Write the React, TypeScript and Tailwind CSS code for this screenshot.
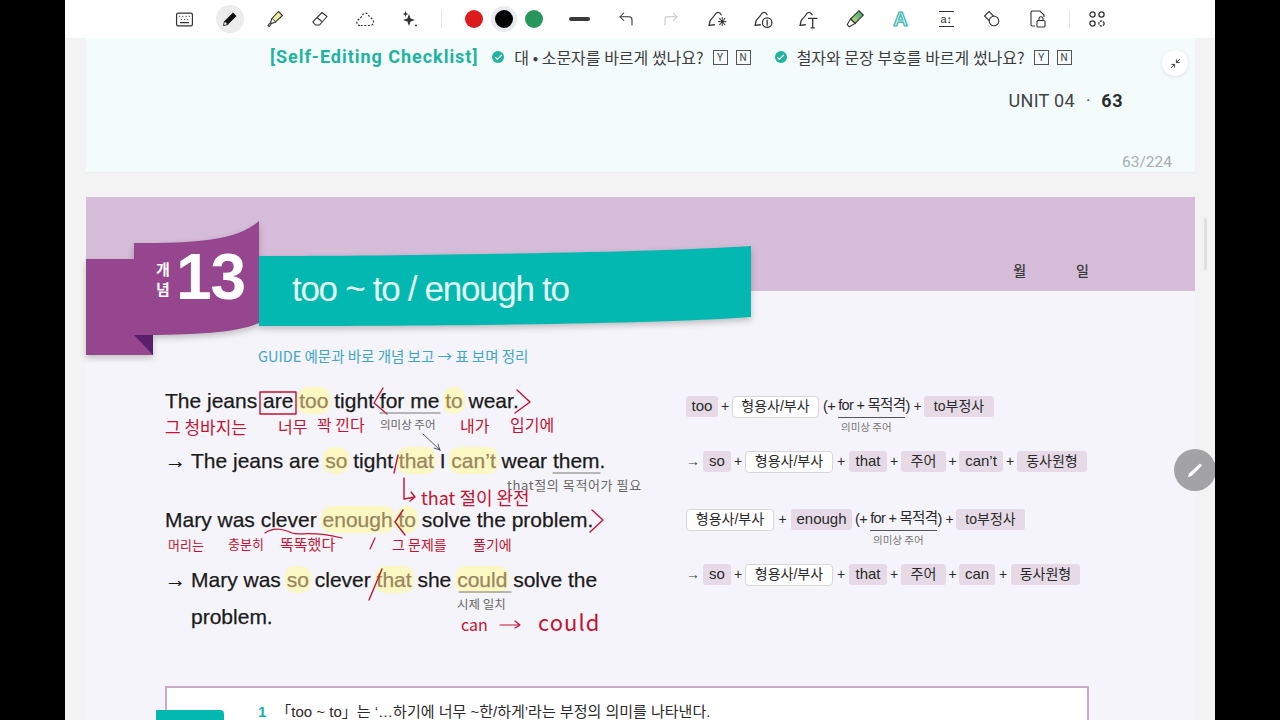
import { Check, CornerUpLeft, CornerUpRight, Keyboard, Minimize2 } from 'lucide-react';
import type { ReactNode } from 'react';

const sans = "font-['Liberation_Sans','Noto_Sans_CJK_KR',sans-serif]";
const kr = "font-['Noto_Sans_CJK_KR',sans-serif]";

function PenIcon() {
  return (
    <svg width="18" height="18" viewBox="0 0 18 18">
      <path d="M12 2.5 15.5 6 7 14.5 2.5 15.5 3.5 11Z" fill="#111" />
      <path d="M3.5 11 7 14.5 2.5 15.5Z" fill="#fff" stroke="#111" strokeWidth="0.8" />
    </svg>
  );
}

function HighlighterIcon() {
  return (
    <svg width="18" height="18" viewBox="0 0 18 18" fill="none" stroke="#333" strokeWidth="1.1">
      <path d="M12.5 1.5 16.5 5.5 9.5 12 6 8.5Z" fill="#f1efa5" />
      <path d="M6 8.5 4.5 12.5 5.5 13.5 9.5 12M4.5 12.5 2 15.5 3.2 16.5 5.5 13.5" fill="#fff" />
    </svg>
  );
}

function EraserIcon() {
  return (
    <svg width="18" height="18" viewBox="0 0 18 18" fill="none" stroke="#333" strokeWidth="1.1" strokeLinejoin="round">
      <path d="M11 2.5 16 6.5 8.5 15 4.5 15 1.8 11.8Z" />
      <path d="M6 7.5 10.8 11.5" />
    </svg>
  );
}

function LassoIcon() {
  return (
    <svg width="20" height="18" viewBox="0 0 20 18" fill="none" stroke="#333" strokeWidth="1.2" strokeDasharray="2 1.6">
      <path d="M5 15.5C2 15.5 1 12.5 2.5 10.5 3.5 9 5.5 8.5 6.5 6.5 8 3 12 2 13.5 5 14.5 7.5 18 8.5 18.5 11.5 19 14.5 16.5 15.5 14 15.5Z" />
    </svg>
  );
}

function SparkleIcon() {
  return (
    <svg width="18" height="18" viewBox="0 0 18 18" fill="#333">
      <path d="M8 4 9.6 8.4 14 10 9.6 11.6 8 16 6.4 11.6 2 10 6.4 8.4Z" />
      <path d="M4.5 1 5.3 3.2 7.5 4 5.3 4.8 4.5 7 3.7 4.8 1.5 4 3.7 3.2Z" />
      <circle cx="15" cy="15.5" r="1" />
    </svg>
  );
}

function LassoTool({ children }: { children: ReactNode }) {
  return (
    <svg width="21" height="21" viewBox="0 0 20 20" fill="none" stroke="#333" strokeWidth="1.2" strokeLinecap="round">
      <path d="M2 15.5 3 11C4.5 9 6 8 7.5 5.5 9 2.5 12 2.5 13.5 5.5" />
      <path d="M2 15.5 7 15" />
      {children}
    </svg>
  );
}

function MarkerIcon() {
  return (
    <svg width="20" height="20" viewBox="0 0 18 18" stroke="#333" strokeWidth="1">
      <defs>
        <linearGradient id="mk" x1="0" y1="1" x2="1" y2="0">
          <stop offset="0" stopColor="#cfe58a" />
          <stop offset="1" stopColor="#2f9c6c" />
        </linearGradient>
      </defs>
      <path d="M12.5 1.5 16.5 5.5 9 13 5 9Z" fill="url(#mk)" />
      <path d="M5 9 2 14 4 16 9 13Z" fill="#fff" />
    </svg>
  );
}

function ShapesIcon() {
  return (
    <svg width="18" height="18" viewBox="0 0 18 18" fill="none" stroke="#333" strokeWidth="1.1">
      <path d="M6 1.5 10.5 6 6 10.5 1.5 6Z" />
      <circle cx="11" cy="11" r="4.8" fill="#fff" />
    </svg>
  );
}

function LockPageIcon() {
  return (
    <svg width="18" height="20" viewBox="0 0 18 20" fill="none" stroke="#333" strokeWidth="1.1">
      <path d="M6 17H3.5A1.5 1.5 0 0 1 2 15.5V3.5A1.5 1.5 0 0 1 3.5 2H11L15 6V8" />
      <rect x="8" y="11.5" width="8" height="6.5" rx="1" />
      <path d="M10 11.5V9.8A2 2 0 0 1 14 9.8V11.5" />
    </svg>
  );
}

function AppsIcon() {
  return (
    <svg width="18" height="18" viewBox="0 0 18 18" fill="none" stroke="#333" strokeWidth="1.3">
      <circle cx="4.5" cy="4.5" r="2.6" />
      <circle cx="13.5" cy="4.5" r="2.6" />
      <circle cx="4.5" cy="13.5" r="2.6" />
      <circle cx="13.5" cy="13.5" r="2.6" strokeDasharray="2.4 1" />
    </svg>
  );
}

function ToolSlot({ children, className = 'w-[45px]' }: { children: ReactNode; className?: string }) {
  return <div className={'flex items-center justify-center ' + className}>{children}</div>;
}

function Toolbar() {
  return (
    <div className="flex h-[38px] shrink-0 items-center bg-white pl-[97px] text-[#333]">
      <ToolSlot><Keyboard size={19} strokeWidth={1.5} /></ToolSlot>
      <ToolSlot>
        <div className="flex h-[28px] w-[28px] items-center justify-center rounded-full bg-[#ececec]"><PenIcon /></div>
      </ToolSlot>
      <ToolSlot><HighlighterIcon /></ToolSlot>
      <ToolSlot><EraserIcon /></ToolSlot>
      <ToolSlot><LassoIcon /></ToolSlot>
      <ToolSlot><SparkleIcon /></ToolSlot>
      <div className="ml-[9px] h-[18px] w-px bg-[#e6e6e6]" />
      <div className="ml-[17px] flex">
        <ToolSlot className="w-[30px]"><div className="h-[18px] w-[18px] rounded-full bg-[#dc1c1c]" /></ToolSlot>
        <ToolSlot className="w-[30px]">
          <div className="h-[18px] w-[18px] rounded-full bg-black shadow-[0_0_0_4px_#e9ebec]" />
        </ToolSlot>
        <ToolSlot className="w-[30px]"><div className="h-[18px] w-[18px] rounded-full bg-[#27965a]" /></ToolSlot>
      </div>
      <div className="ml-[8px] flex">
        <ToolSlot className="w-[45.8px]"><div className="h-[4px] w-[21px] rounded-full bg-[#3a3a3a]" /></ToolSlot>
        <ToolSlot className="w-[45.8px]"><CornerUpLeft size={18} strokeWidth={1.4} /></ToolSlot>
        <ToolSlot className="w-[45.8px]"><CornerUpRight size={18} strokeWidth={1.4} className="text-[#c4c4c4]" /></ToolSlot>
        <ToolSlot className="w-[45.8px]">
          <LassoTool><path d="M12 9 17 15M17 9 12 15M14.5 8V16M11 12H18" strokeWidth="1" strokeDasharray="1.2 1" /></LassoTool>
        </ToolSlot>
        <ToolSlot className="w-[45.8px]">
          <LassoTool><circle cx="13.5" cy="13" r="4.5" /><path d="M13.5 10.5V15.5" /></LassoTool>
        </ToolSlot>
        <ToolSlot className="w-[45.8px]">
          <LassoTool><path d="M10 9H18M14 9V18M12.5 18H15.5" /></LassoTool>
        </ToolSlot>
        <ToolSlot className="w-[45.8px]"><MarkerIcon /></ToolSlot>
        <ToolSlot className="w-[45.8px]">
          <span className={"text-[20px] font-bold leading-none text-[#d4f3ef] [-webkit-text-stroke:1.2px_#37b6ab] " + sans}>A</span>
        </ToolSlot>
        <ToolSlot className="w-[45.8px]">
          <div className="flex h-[16px] w-[15px] items-center justify-center border-y border-[#333] text-[11px] leading-none">
            <span className={sans}>a↕</span>
          </div>
        </ToolSlot>
        <ToolSlot className="w-[45.8px]"><ShapesIcon /></ToolSlot>
        <ToolSlot className="w-[45.8px]"><LockPageIcon /></ToolSlot>
      </div>
      <div className="ml-[8px] h-[18px] w-px bg-[#e6e6e6]" />
      <ToolSlot className="ml-[5px] w-[45px]"><AppsIcon /></ToolSlot>
    </div>
  );
}

function CheckItem({ text, className }: { text: string; className: string }) {
  return (
    <div className={'flex items-center ' + className}>
      <span className="flex h-[12px] w-[12px] items-center justify-center rounded-full bg-[#1fb3a0]">
        <Check size={9} strokeWidth={3.5} className="text-white" />
      </span>
      <span className={"ml-[10px] text-[16px] leading-[22px] text-[#3c3c3c] " + kr}>{text}</span>
      <span className="ml-[9px] flex h-[15px] w-[15px] items-center justify-center border border-[#555] font-['Roboto',sans-serif] text-[10px] text-[#444]">Y</span>
      <span className="ml-[8px] flex h-[15px] w-[15px] items-center justify-center border border-[#555] font-['Roboto',sans-serif] text-[10px] text-[#444]">N</span>
    </div>
  );
}

function TopPage() {
  return (
    <div className="relative ml-[21px] h-[135px] w-[1109px] shrink-0 border-b border-[#e8eded] bg-[#f3fbfb]">
      <div className="flex items-center pl-[184px] pt-[8px]">
        <span className="font-['Roboto',sans-serif] text-[18px] font-bold leading-[22px] tracking-[0.97px] text-[#1fb3a0]">[Self-Editing Checklist]</span>
        <CheckItem className="ml-[14px]" text="대 • 소문자를 바르게 썼나요?" />
        <CheckItem className="ml-[24px]" text="철자와 문장 부호를 바르게 썼나요?" />
      </div>
      <div className="mt-[19px] flex items-center justify-end pr-[72px] font-['Roboto',sans-serif] text-[#3f4448]">
        <span className="text-[18px] tracking-[0.3px]">UNIT 04</span>
        <span className="ml-[11px] text-[17px]">·</span>
        <span className="ml-[11px] text-[18px] font-bold tracking-[0.5px] text-[#2a2e31]">63</span>
      </div>
      <div className="mt-[38px] pr-[23px] text-right font-['Roboto',sans-serif] text-[15.5px] leading-[20px] text-[#a9adb0]">63/224</div>
      <div className="absolute left-[1076px] top-[12px] flex h-[26px] w-[26px] items-center justify-center rounded-full bg-white shadow-[0_1px_4px_rgba(0,0,0,0.1)]">
        <Minimize2 size={11} className="text-[#333]" />
      </div>
    </div>
  );
}

function Ribbon() {
  return (
    <div className="absolute left-0 top-[24px] h-[135px] w-[666px]">
      <svg width="672" height="140" viewBox="0 0 672 140" className="drop-shadow-[0_3px_3px_rgba(0,0,0,0.22)]">
        <path d="M173 35C300 35 560 32 665 25V96C560 104 300 105 173 105Z" fill="#02b8b0" />
        <path d="M48 22C110 22 150 20 173 0V102C150 112 110 114 48 114H67V134H0V38H48Z" fill="#96458f" />
        <path d="M48 114H67V134Z" fill="#5a1f6a" />
      </svg>
      <div className={"absolute left-[69px] top-[38px] w-[16px] text-center text-[15px] font-bold leading-[20px] text-white " + kr}>개<br />념</div>
      <div className="absolute left-[90px] top-[18px] font-['Liberation_Sans',sans-serif] text-[64px] font-bold leading-[76px] tracking-[-1px] text-white">13</div>
      <div className="absolute left-[206px] top-[48px] whitespace-nowrap font-['Liberation_Sans',sans-serif] text-[35px] leading-[40px] tracking-[-1.3px] text-[#e4fbf5]">too ~ to / enough to</div>
    </div>
  );
}

function Hi({ children }: { children: ReactNode }) {
  return <span className="rounded-[8px] bg-[#fbf8c4] text-[#9b8560] shadow-[0_0_0_2px_#fbf8c4]">{children}</span>;
}

function Sentence({ arrow, className, children }: { arrow?: boolean; className: string; children: ReactNode }) {
  return (
    <div className={'flex h-[28px] items-center whitespace-pre text-[21px] leading-[28px] text-[#1b1b1b] [-webkit-text-stroke:0.25px_currentColor] ' + className}>
      {arrow && <span className="w-[26px]">→</span>}
      <span>{children}</span>
    </div>
  );
}

// pen notes on top of the page, positions are page coordinates minus the block origin
function Note({ className, children }: { className: string; children: ReactNode }) {
  return <span className={'absolute whitespace-nowrap leading-none ' + kr + ' ' + className}>{children}</span>;
}

function PenNotes() {
  return (
    <>
      <svg className="absolute left-0 top-0 h-[260px] w-[520px]" viewBox="165 385 520 260" fill="none" stroke="#c41230" strokeWidth="1.4" strokeLinecap="round" strokeLinejoin="round">
        <rect x="260" y="392" width="36" height="22" />
        <path d="M383 388 374 403 387 414" />
        <path d="M517 390 530 402 515 413" />
        <path d="M380 413H440M553 473H600M459 592H511" stroke="#777" strokeWidth="1" />
        <path d="M423 434 440 450M440 450 434 448M440 450 438 444" stroke="#333" strokeWidth="0.8" />
        <path d="M398 455 394 473" />
        <path d="M404 478V499L415 497M411 492 415 497 410 501" />
        <path d="M403 510 395 522 405 535" />
        <path d="M592 510 603 520 590 532" />
        <path d="M265 533C275 526 285 530 292 533 300 536 310 530 342 538" strokeWidth="1.2" />
        <path d="M382 569 369 600" />
        <path d="M500 625H520M515 621 520 625 515 628" strokeWidth="1.2" />
        <path d="M375 538 370 549" strokeWidth="1.2" />
      </svg>
      <Note className="left-0 top-[33px] text-[17px] text-[#c41230]">그 청바지는</Note>
      <Note className="left-[113px] top-[33px] text-[16px] text-[#c41230]">너무</Note>
      <Note className="left-[152px] top-[31px] text-[16px] text-[#c41230]">꽉 낀다</Note>
      <Note className="left-[215px] top-[34px] text-[11.5px] text-[#666]">의미상 주어</Note>
      <Note className="left-[295px] top-[32px] text-[16px] text-[#c41230]">내가</Note>
      <Note className="left-[345px] top-[31px] text-[16px] text-[#c41230]">입기에</Note>
      <Note className="left-[256px] top-[103px] text-[18px] text-[#c41230]">that 절이 완전</Note>
      <Note className="left-[342px] top-[93px] text-[13px] tracking-[0.6px] text-[#666]">that절의 목적어가 필요</Note>
      <Note className="left-[3px] top-[153px] text-[13px] text-[#c41230]">머리는</Note>
      <Note className="left-[63px] top-[152px] text-[13px] text-[#c41230]">충분히</Note>
      <Note className="left-[115px] top-[151px] text-[15px] text-[#c41230]">똑똑했다</Note>
      <Note className="left-[227px] top-[152px] text-[14px] text-[#c41230]">그 문제를</Note>
      <Note className="left-[308px] top-[152px] text-[14px] text-[#c41230]">풀기에</Note>
      <Note className="left-[292px] top-[213px] text-[12.5px] text-[#666]">시제 일치</Note>
      <Note className="left-[296px] top-[231px] text-[16px] text-[#c41230]">can</Note>
      <Note className="left-[373px] top-[225px] text-[22px] tracking-[1px] text-[#c41230]">could</Note>
    </>
  );
}

function Chip({ className, children }: { className: string; children: ReactNode }) {
  return <span className={'flex h-[21px] items-center justify-center rounded-[3px] bg-[#e6dae7] ' + className}>{children}</span>;
}

function WhiteChip({ className }: { className: string }) {
  return (
    <span className={'flex h-[22px] items-center justify-center rounded-[4px] border border-[#d9d6da] bg-white ' + className}>형용사/부사</span>
  );
}

function Plus({ className }: { className: string }) {
  return <span className={'text-center ' + className}>+</span>;
}

function ForObject({ className }: { className: string }) {
  return (
    <span className={'relative flex h-[21px] items-center whitespace-pre text-[14.5px] tracking-[-0.7px] ' + className}>
      (+ <span className="border-b border-[#555]">for + 목적격</span>)
      <span className={"absolute left-[18px] top-[23px] whitespace-nowrap text-[10.5px] tracking-normal text-[#777] " + kr}>의미상 주어</span>
    </span>
  );
}

function FormulaRow({ className, children }: { className: string; children: ReactNode }) {
  return <div className={'flex h-[21px] items-center text-[14px] text-[#2a2a2a] ' + className}>{children}</div>;
}

function Arrow() {
  return <span className="w-[17px] text-[#444]">→</span>;
}

function Formulas() {
  return (
    <div className={'flex w-[420px] flex-col pt-[11px] ' + sans}>
      <FormulaRow className="">
        <Chip className="w-[32px] text-[15px]">too</Chip>
        <Plus className="w-[14px]" />
        <WhiteChip className="w-[87px]" />
        <ForObject className="ml-[4px] w-[88px]" />
        <Plus className="w-[13px]" />
        <Chip className="w-[70px]">to부정사</Chip>
      </FormulaRow>
      <FormulaRow className="mt-[34px]">
        <Arrow />
        <Chip className="w-[28px] text-[15px]">so</Chip>
        <Plus className="w-[14px]" />
        <WhiteChip className="w-[88px]" />
        <Plus className="w-[16px]" />
        <Chip className="w-[38px] text-[15px]">that</Chip>
        <Plus className="w-[14px]" />
        <Chip className="w-[45px]">주어</Chip>
        <Plus className="w-[13px]" />
        <Chip className="w-[44px] text-[15px]">can’t</Chip>
        <Plus className="w-[14px]" />
        <Chip className="w-[70px]">동사원형</Chip>
      </FormulaRow>
      <FormulaRow className="mt-[37px]">
        <WhiteChip className="w-[88px]" />
        <Plus className="w-[17px]" />
        <Chip className="w-[61px] text-[15px]">enough</Chip>
        <ForObject className="ml-[3px] w-[88px]" />
        <Plus className="w-[13px]" />
        <Chip className="w-[69px]">to부정사</Chip>
      </FormulaRow>
      <FormulaRow className="mt-[34px]">
        <Arrow />
        <Chip className="w-[28px] text-[15px]">so</Chip>
        <Plus className="w-[14px]" />
        <WhiteChip className="w-[88px]" />
        <Plus className="w-[16px]" />
        <Chip className="w-[38px] text-[15px]">that</Chip>
        <Plus className="w-[14px]" />
        <Chip className="w-[45px]">주어</Chip>
        <Plus className="w-[13px]" />
        <Chip className="w-[36px] text-[15px]">can</Chip>
        <Plus className="w-[16px]" />
        <Chip className="w-[69px]">동사원형</Chip>
      </FormulaRow>
    </div>
  );
}

function LessonPage() {
  return (
    <div className="relative ml-[21px] w-[1109px] flex-1 bg-[#f5f4fa]">
      <div className="flex h-[94px] items-center justify-end bg-[#d5bcd8] pr-[106px] pt-[52px] text-[14px] font-medium text-[#3c3c3c]">
        <span className={'mr-[50px] ' + kr}>월</span>
        <span className={kr}>일</span>
      </div>
      <Ribbon />
      <div className={'ml-[172px] mt-[55px] h-[20px] text-[14.5px] leading-[20px] text-[#3fa6c7] ' + kr}>GUIDE 예문과 바로 개념 보고 → 표 보며 정리</div>
      <div className="ml-[79px] mt-[19px] flex">
        <div className={'relative h-[260px] w-[521px] pt-[2px] ' + sans}>
          <Sentence className="">The jeans are <Hi>too</Hi> tight for me <Hi>to</Hi> wear.</Sentence>
          <Sentence arrow className="mt-[32px]">The jeans are <Hi>so</Hi> tight <Hi>that</Hi> I <Hi>can’t</Hi> wear them.</Sentence>
          <Sentence className="mt-[31px]">Mary was clever <Hi>enough</Hi> <Hi>to</Hi> solve the problem.</Sentence>
          <Sentence arrow className="mt-[32px]">Mary was <Hi>so</Hi> clever <Hi>that</Hi> she <Hi>could</Hi> solve the</Sentence>
          <Sentence className="mt-[9px] pl-[26px]">problem.</Sentence>
          <PenNotes />
        </div>
        <Formulas />
      </div>
      <div className="relative ml-[79px] mt-[41px] h-[60px] w-[924px] border-2 border-[#c9aac6] bg-white pl-[91px] pt-[14px]">
        <div className={'flex items-center text-[15px] leading-[20px] text-[#2a2a2a] ' + sans}>
          <span className="mr-[10px] font-bold text-[#12b5ab]">1</span>
          <span>「too ~ to」는 ‘…하기에 너무 ~한/하게’라는 부정의 의미를 나타낸다.</span>
        </div>
        <div className="absolute left-[-11px] top-[22px] h-[20px] w-[68px] rounded-tr-[4px] bg-[#02b8b0]" />
      </div>
    </div>
  );
}

export default function App() {
  return (
    <div className="flex h-[720px] w-[1280px] justify-center overflow-hidden bg-black">
      <div className="relative flex h-[720px] w-[1150px] flex-col overflow-hidden bg-[#f3f3f4]">
        <Toolbar />
        <TopPage />
        <div className="h-[24px] shrink-0" />
        <LessonPage />
        <div className="absolute left-[1139px] top-[218px] h-[52px] w-[3px] rounded-full bg-[#dfdfe0]" />
        <div className="absolute left-[1109px] top-[449px] flex h-[42px] w-[42px] items-center justify-center rounded-full bg-[#a3a3a5]">
          <svg width="20" height="20" viewBox="0 0 20 20" fill="#fff">
            <path d="M15 3.5 17 5.5 6.5 16 3 17 4 13.5Z" />
          </svg>
        </div>
      </div>
    </div>
  );
}
